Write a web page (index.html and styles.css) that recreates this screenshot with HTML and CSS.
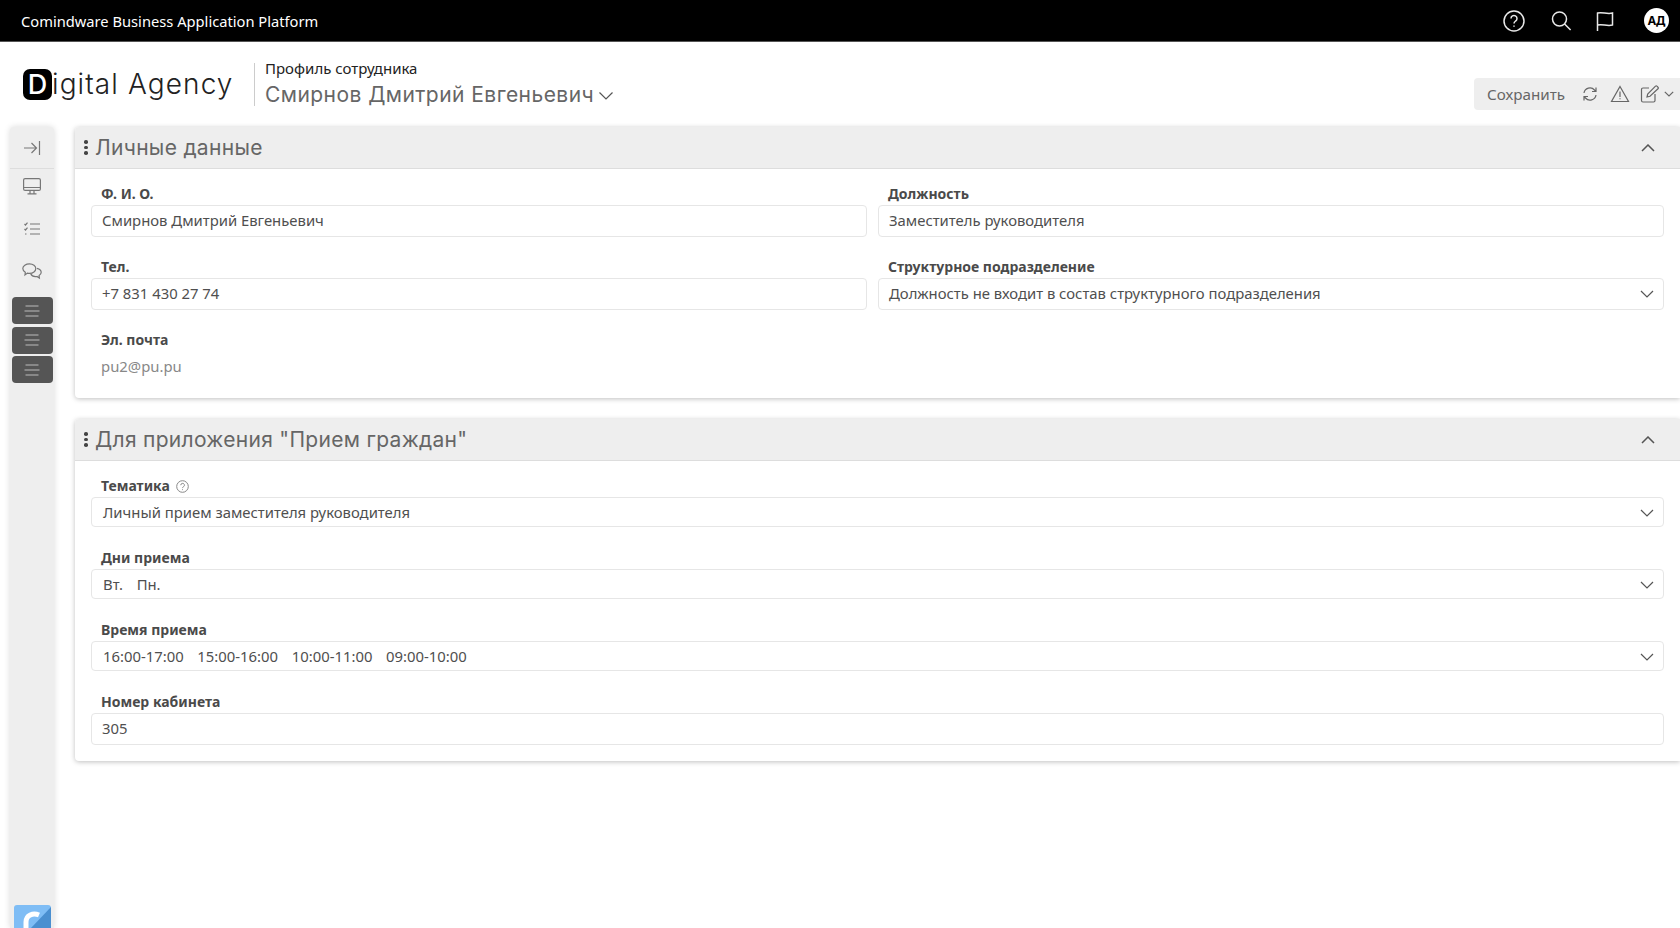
FILE: index.html
```html
<!DOCTYPE html>
<html lang="ru">
<head>
<meta charset="utf-8">
<title>Профиль сотрудника</title>
<link rel="stylesheet" href="styles.css">
</head>
<body>
<header class="topbar">
  <div class="brand">Comindware Business Application Platform</div>
  <div class="top-icons">
    <svg class="ti" width="24" height="24" viewBox="0 0 24 24"><circle cx="12" cy="12" r="10" /><path d="M9 9.500a3 3 0 1 1 4.600 2.500c-1 .7-1.600 1.200-1.600 2.500" /><path d="M12 16.600v1.200" /></svg>
    <svg class="ti" width="24" height="24" viewBox="0 0 24 24"><circle cx="10.500" cy="10" r="7" /><path d="M15.600 15l6 6" /></svg>
    <svg class="ti" width="24" height="24" viewBox="0 0 24 24"><path d="M4.500 22V4c5-1.500 9 1.500 15 0v12c-6 1.500-10-1.500-15 0" /></svg>
    <div class="avatar">АД</div>
  </div>
</header>

<section class="subhead">
  <div class="logo"><span class="logo-d">D</span><span class="logo-t">igital Agency</span></div>
  <div class="titles">
    <div class="crumb">Профиль сотрудника</div>
    <div class="name">Смирнов Дмитрий Евгеньевич
      <svg class="chev" width="16" height="10" viewBox="0 0 16 10"><path d="M1.500 1.500L8 8l6.500-6.500" /></svg>
    </div>
  </div>
  <div class="actions">
    <span class="save">Сохранить</span>
    <svg class="ai" width="18" height="18" viewBox="0 0 18 18"><path d="M3 8a6 6 0 0 1 10.500-3l1.500 1.500M15 2.500v4h-4M15 10a6 6 0 0 1-10.500 3L3 11.500M3 15.500v-4h4" /></svg>
    <svg class="ai" width="20" height="18" viewBox="0 0 20 18"><path d="M10 1.500L18.500 16.500h-17z" /><path d="M10 6.500v5.500M10 13.300v1" /></svg>
    <svg class="ai" width="20" height="18" viewBox="0 0 20 18"><path d="M9 3H3a1.500 1.500 0 0 0-1.500 1.500v11A1.500 1.500 0 0 0 3 17h10.500a1.500 1.500 0 0 0 1.500-1.500V9" /><path d="M7 12l.7-3L15.500 1.200a1 1 0 0 1 1.500 0l1 1a1 1 0 0 1 0 1.500L10 11.300z" /></svg>
    <svg class="ai" width="10" height="6" viewBox="0 0 10 6"><path d="M.8.800L5 5l4.200-4.200" /></svg>
  </div>
</section>

<main class="layout">
  <nav class="rail">
    <div class="rail-top">
      <svg class="ri" width="18" height="14" viewBox="0 0 18 14"><path d="M1 7h12M8.500 2L13.500 7l-5 5M16.500 0v14" /></svg>
    </div>
    <div class="rail-icons">
      <svg class="ri r1" width="18" height="17" viewBox="0 0 18 17"><rect x=".6" y=".6" width="16.800" height="11.800" rx="1.500" /><path d="M.6 9.500h16.800M7 12.500v3M11 12.500v3M4.500 15.800h9" /></svg>
      <svg class="ri r2" width="16" height="14" viewBox="0 0 16 14"><path d="M6 2h10M6 7h10M6 12h10M.5 2l1 1 2-2.300M.5 7l1 1 2-2.300M1 12h1.500" /></svg>
      <svg class="ri r3" width="20" height="17" viewBox="0 0 20 17"><path d="M7.500.8c3.600 0 6.300 2.100 6.300 4.800s-2.700 4.800-6.300 4.800c-.8 0-1.500-.1-2.100-.3L3 12l.3-2.700C1.800 8.400.8 7.100.8 5.600.8 2.900 3.900.8 7.500.8z" /><path d="M15 5.300c2.400.6 4.200 2.100 4.200 4 0 1.300-.8 2.500-2.100 3.200l.3 2.600-2.500-1.600c-2.700.4-5.300-.7-6.200-2.700" /></svg>
    </div>
    <div class="rail-btns">
      <div class="rb"><svg width="16" height="12" viewBox="0 0 16 12"><path d="M1.500 1h13M.5 6h15M1.500 11h13" /></svg></div>
      <div class="rb"><svg width="16" height="12" viewBox="0 0 16 12"><path d="M1.500 1h13M.5 6h15M1.500 11h13" /></svg></div>
      <div class="rb"><svg width="16" height="12" viewBox="0 0 16 12"><path d="M1.500 1h13M.5 6h15M1.500 11h13" /></svg></div>
    </div>
    <div class="cmw">
      <svg width="37" height="23" viewBox="0 0 37 23"><rect width="37" height="34" rx="3" fill="#7fbdf5" /><path d="M37 2L17 23h20z" fill="#4a8fd0" /><path d="M25 10c-6-2.500-13 0-13 7v6" fill="none" stroke="#fff" stroke-width="5" /></svg>
    </div>
  </nav>

  <div class="panels">
    <section class="panel p1">
      <header class="ph">
        <span class="grip"><i></i><i></i><i></i></span>
        <h2>Личные данные</h2>
        <svg class="up" width="14" height="8" viewBox="0 0 14 8"><path d="M1 7l6-6 6 6" /></svg>
      </header>
      <div class="grid">
        <div class="f"><label>Ф. И. О.</label><div class="inp">Смирнов Дмитрий Евгеньевич</div></div>
        <div class="f"><label>Должность</label><div class="inp">Заместитель руководителя</div></div>
        <div class="f"><label>Тел.</label><div class="inp">+7 831 430 27 74</div></div>
        <div class="f"><label>Структурное подразделение</label><div class="inp sel">Должность не входит в состав структурного подразделения<svg class="dn" width="14" height="8" viewBox="0 0 14 8"><path d="M1 1l6 6 6-6" /></svg></div></div>
        <div class="f"><label>Эл. почта</label><div class="plain">pu2@pu.pu</div></div>
      </div>
    </section>

    <section class="panel p2">
      <header class="ph">
        <span class="grip"><i></i><i></i><i></i></span>
        <h2>Для приложения "Прием граждан"</h2>
        <svg class="up" width="14" height="8" viewBox="0 0 14 8"><path d="M1 7l6-6 6 6" /></svg>
      </header>
      <div class="stack">
        <div class="f"><label>Тематика <svg class="hint" width="13" height="13" viewBox="0 0 13 13"><circle cx="6.500" cy="6.500" r="5.800" /><path d="M4.800 5.200a1.800 1.800 0 1 1 2.700 1.500c-.6.400-1 .7-1 1.400M6.500 9.300v.8" /></svg></label><div class="inp sel short">Личный прием заместителя руководителя<svg class="dn" width="14" height="8" viewBox="0 0 14 8"><path d="M1 1l6 6 6-6" /></svg></div></div>
        <div class="f"><label>Дни приема</label><div class="inp sel short tags"><span>Вт.</span><span>Пн.</span><svg class="dn" width="14" height="8" viewBox="0 0 14 8"><path d="M1 1l6 6 6-6" /></svg></div></div>
        <div class="f"><label>Время приема</label><div class="inp sel short tags"><span>16:00-17:00</span><span>15:00-16:00</span><span>10:00-11:00</span><span>09:00-10:00</span><svg class="dn" width="14" height="8" viewBox="0 0 14 8"><path d="M1 1l6 6 6-6" /></svg></div></div>
        <div class="f"><label>Номер кабинета</label><div class="inp">305</div></div>
      </div>
    </section>
  </div>
</main>
</body>
</html>
```
FILE: styles.css
```css
* { box-sizing: border-box; }
html, body { margin: 0; height: 928px; overflow: hidden; background: #fff; }
body { font-family: "Noto Sans", "Open Sans", sans-serif; color: #4a4a4a; font-size: 14.850px; }
svg { fill: none; stroke: currentColor; stroke-width: 1.2; display: block; flex: none; }

.topbar { height: 42px; background: #000; color: #fff; display: flex; align-items: center; padding: 0 11px 0 21px; border-bottom: 1px solid #555; }
.brand { font-size: 14.700px; }
.top-icons { margin-left: auto; display: flex; align-items: center; }
.ti { stroke-width: 1.500; color: #e8e8e8; margin-right: 23px; }
.ti:nth-child(2) { margin-right: 20px; }
.ti:nth-child(3) { margin-right: 27px; }
.avatar { width: 25px; height: 25px; border-radius: 50%; background: #fff; color: #000; font-weight: 700; font-size: 12px; display: flex; align-items: center; justify-content: center; }

.subhead { height: 85px; display: flex; align-items: flex-start; padding: 21px 0 0 23px; }
.logo { display: flex; align-items: center; margin-top: 6px; color: #222; width: 231px; white-space: nowrap; }
.logo-d { width: 29px; height: 31px; background: #000; color: #fff; border-radius: 7px; font: 500 27px/31px Inter, sans-serif; text-align: center; flex: none; }
.logo-t { font: 300 28px/31px Inter, sans-serif; letter-spacing: 1.100px; }
.titles { border-left: 1px solid #ccc; padding-left: 10px; height: 43px; white-space: nowrap; }
.crumb { color: #222; font-size: 15px; line-height: 15px; margin-top: -2px; }
.name { font: 400 21px/28px Inter, sans-serif; letter-spacing: .45px; color: #666; display: flex; align-items: center; gap: 4px; margin-top: 5px; }
.chev { color: #555; margin-top: 2px; }
.actions { margin: 15px 0 0 auto; width: 206px; height: 32px; background: #eee; border-radius: 4px 0 0 4px; display: flex; align-items: center; padding-left: 13px; color: #666; }
.save { font-size: 15.200px; width: 94px; }
.ai:nth-child(2) { margin-right: 11px; }
.ai:nth-child(3) { margin-right: 10px; }
.ai:nth-child(4) { margin-right: 4px; }

.layout { display: flex; height: 801px; }
.rail { width: 44px; margin-left: 10px; background: #eee; border-radius: 4px 4px 0 0; box-shadow: 0 0 6px rgba(0,0,0,.15); display: flex; flex-direction: column; align-items: center; color: #777; }
.rail-top { height: 42px; width: 100%; border-bottom: 1px solid #ddd; display: flex; align-items: center; justify-content: center; }
.rail-icons { display: flex; flex-direction: column; align-items: center; }
.r1 { margin-top: 9px; }
.r2 { margin-top: 27px; }
.r3 { margin-top: 27px; }
.rail-btns { margin-top: 17px; display: flex; flex-direction: column; gap: 2.500px; }
.rb { width: 41px; height: 27px; background: #555; border-radius: 4px; display: flex; align-items: center; justify-content: center; color: #bbb; }
.cmw { margin-top: auto; }
.cmw svg { stroke: none; }

.panels { flex: 1; margin-left: 21px; min-width: 0; }
.panel { background: #fff; box-shadow: 0 1px 5px rgba(0,0,0,.25); border-radius: 4px 0 0 4px; }
.p1 { height: 271px; }
.p2 { height: 342px; margin-top: 21px; }
.ph { height: 42px; background: #eee; border-bottom: 1px solid #ddd; border-radius: 4px 0 0 0; display: flex; align-items: center; padding-left: 9px; color: #555; }
.grip { display: flex; flex-direction: column; gap: 2px; width: 4px; margin-right: 7px; }
.grip i { width: 3.500px; height: 3.500px; border-radius: 50%; background: #444; }
.ph h2 { margin: 0; font: 400 21px/28px Inter, sans-serif; letter-spacing: .3px; color: #666; }
.up { margin-left: auto; margin-right: 25px; stroke-width: 1.500; }

.grid { display: grid; grid-template-columns: 776px 786px; column-gap: 11px; padding: 15px 0 0 16px; }
.stack { padding: 15px 16px 0 16px; }
.f label { display: block; font-weight: 700; font-size: 14px; line-height: 19px; padding-left: 10px; color: #4a4a4a; height: 21px; }
.grid .f { height: 73px; }
.stack .f { height: 72px; }
.inp { height: 32px; border: 1px solid #e6e6e6; border-radius: 4px; padding: 0 10px 3px; display: flex; align-items: center; color: #4f4f4f; }
.short { height: 30px; padding: 0 10px 1px 11px; }
.plain { color: #888; padding: 4px 10px 0; line-height: 22px; }
.dn { margin-left: auto; margin-right: -1px; color: #555; margin-top: 2px; }
.tags span { margin-right: 13.700px; }
.hint { display: inline-block; vertical-align: -2px; color: #888; margin-left: 3px; stroke-width: 1; }
```
